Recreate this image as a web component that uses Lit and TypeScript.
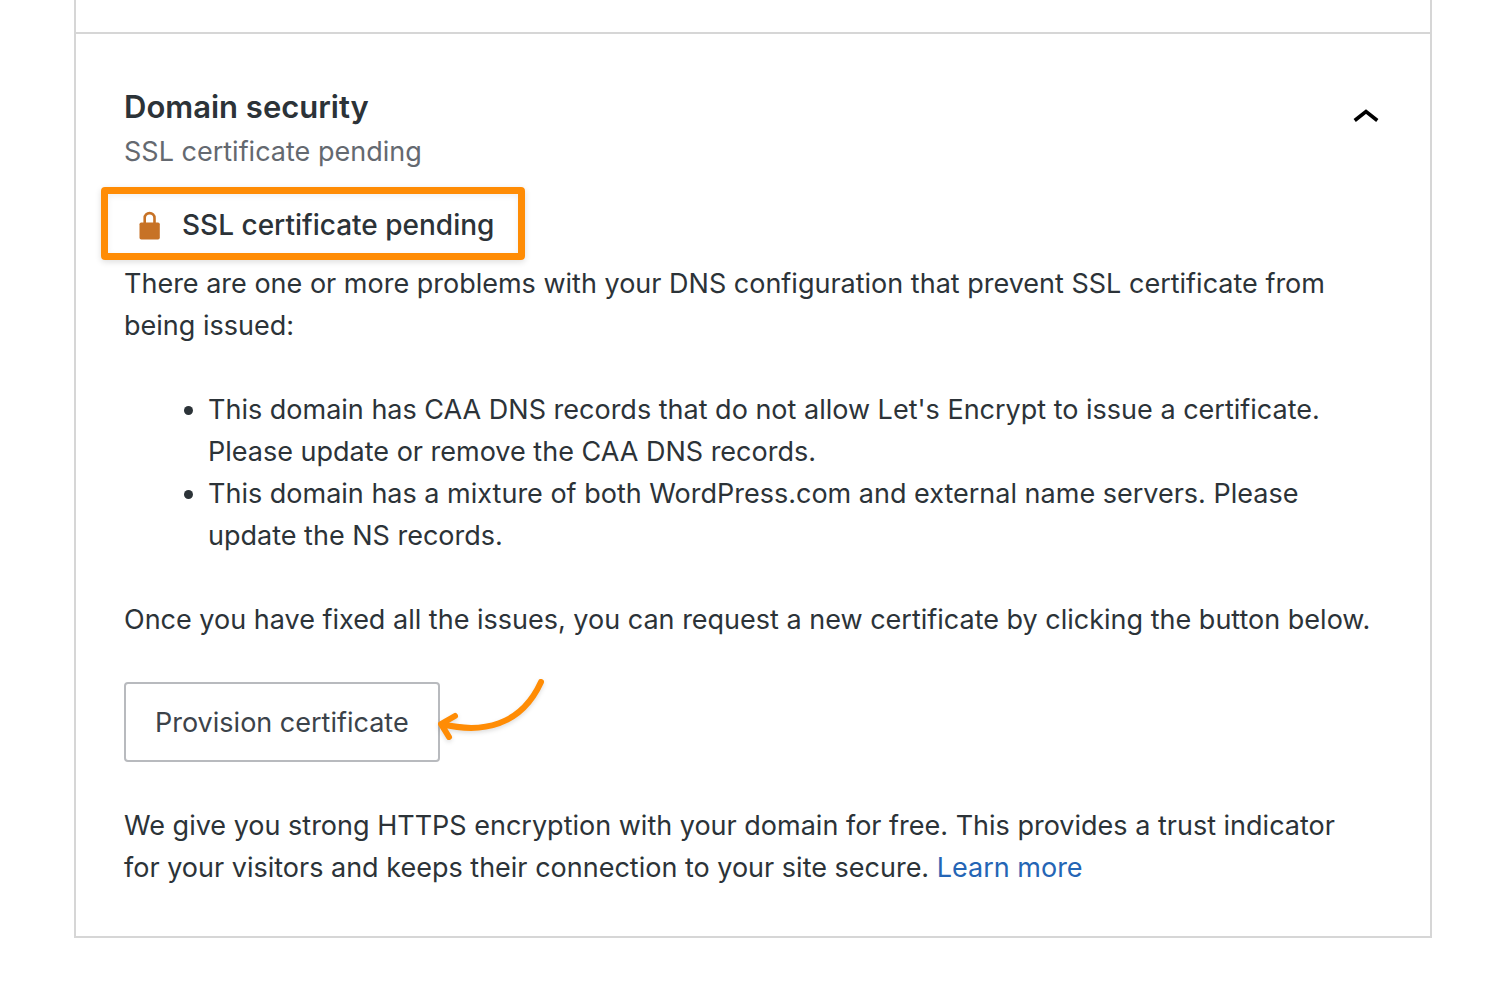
import { LitElement, html, css } from "lit";
import { customElement, state } from "lit/decorators.js";

@customElement("app-root")
class AppRoot extends LitElement {
  @state() private open = true;

  static styles = css`
    :host {
      display: block;
      box-sizing: border-box;
      min-height: 100vh;
      padding: 0 60px 52px 74px;
      background: #fff;
      color: #2c3338;
      font: 27px/42px Inter, sans-serif;
    }
    .previous {
      height: 32px;
      border: 2px solid #d6d6d6;
      border-top: 0;
    }
    .card {
      border: 2px solid #d6d6d6;
      border-top: 0;
      padding: 49px 48px 47px;
    }
    .header {
      display: flex;
      justify-content: space-between;
      align-items: flex-start;
    }
    h2 {
      margin: 0;
      font-size: 31px;
      line-height: 48px;
      font-weight: 600;
    }
    .subtitle {
      margin: 0;
      color: #646970;
    }
    .toggle {
      display: flex;
      margin-top: 17px;
      padding: 0;
      border: 0;
      background: none;
      cursor: pointer;
    }
    .status {
      display: flex;
      align-items: center;
      gap: 20px;
      width: fit-content;
      box-sizing: border-box;
      height: 73px;
      margin: 14px 0 3px -23px;
      padding: 2px 24px 0 31px;
      border: 7px solid #ff8c05;
      border-radius: 4px;
      box-shadow: 0 2px 6px #0002, inset 0 2px 6px #0001;
      font-size: 28px;
      font-weight: 500;
    }
    p {
      margin: 0;
    }
    ul {
      margin: 42px 0;
      padding-left: 84px;
    }
    .action {
      display: flex;
      margin: 41px 0 43px;
    }
    .provision {
      height: 80px;
      padding: 2px 29px 0;
      border: 2px solid #b8babe;
      border-radius: 4px;
      background: #fff;
      color: #3c434a;
      font: inherit;
      cursor: pointer;
    }
    .arrow {
      margin: -8px 0 0 -6px;
      overflow: visible;
      pointer-events: none;
      filter: drop-shadow(0 2px 2px #0002);
    }
    .note {
      padding-right: 24px;
    }
    a {
      color: #2465b5;
      text-decoration: none;
    }
  `;

  private details() {
    return html`
      <div class="status">
        <svg width="23" height="30" viewBox="0 0 23 30" aria-hidden="true">
          <path d="M5.700 14V8A4.900 4.900 0 0 1 15.500 8V14" fill="none" stroke="#c77226" stroke-width="2.600" />
          <rect x="0.500" y="12.500" width="20.300" height="17" rx="1.800" fill="#c77226" />
        </svg>
        <span>SSL certificate pending</span>
      </div>
      <p>There are one or more problems with your DNS configuration that prevent SSL certificate from being issued:</p>
      <ul>
        <li>This domain has CAA DNS records that do not allow Let's Encrypt to issue a certificate. Please update or remove the CAA DNS records.</li>
        <li>This domain has a mixture of both WordPress.com and external name servers. Please update the NS records.</li>
      </ul>
      <p>Once you have fixed all the issues, you can request a new certificate by clicking the button below.</p>
      <div class="action">
        <button class="provision" type="button">Provision certificate</button>
        <svg class="arrow" width="112" height="70" viewBox="434 674 112 70" aria-hidden="true">
          <path d="M541 682C521 726 482 734 442 724M455 716L441 724L449 737" fill="none" stroke="#ff8c05" stroke-width="6" stroke-linecap="round" stroke-linejoin="round" />
        </svg>
      </div>
      <p class="note">We give you strong HTTPS encryption with your domain for free. This provides a trust indicator for your visitors and keeps their connection to your site secure. <a href="#learn">Learn more</a></p>
    `;
  }

  render() {
    return html`
      <div class="previous"></div>
      <section class="card">
        <header class="header">
          <div>
            <h2>Domain security</h2>
            <p class="subtitle">SSL certificate pending</p>
          </div>
          <button class="toggle" type="button" aria-label="Toggle domain security" aria-expanded=${this.open} @click=${() => (this.open = !this.open)}>
            <svg width="30" height="30" viewBox="0 0 30 30" aria-hidden="true">
              <path d="M2.700 20.500L14 11.500L25.300 20.500" fill="none" stroke="#000" stroke-width="3.600" />
            </svg>
          </button>
        </header>
        ${this.open ? this.details() : ""}
      </section>
    `;
  }
}
